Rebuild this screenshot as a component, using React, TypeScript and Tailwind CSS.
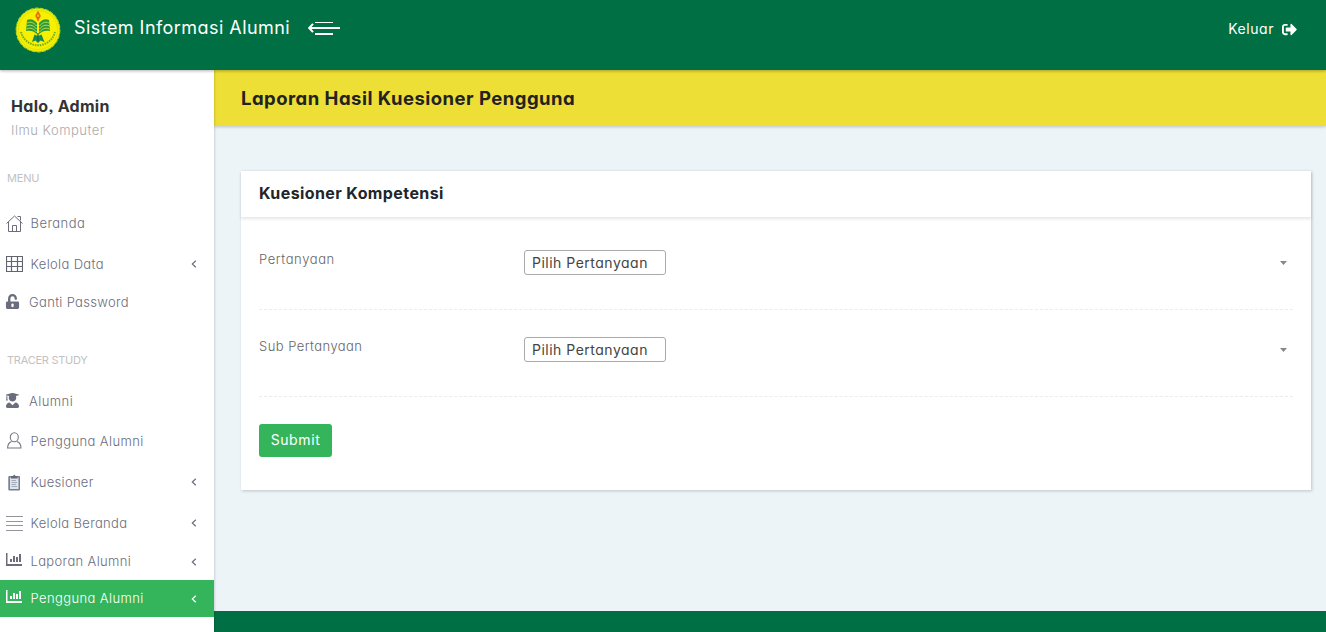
import React from "react";
import { FaUnlockAlt, FaUserGraduate, FaSignOutAlt } from "react-icons/fa";

function Logo() {
  return (
    <svg width="46" height="46" viewBox="0 0 46 46">
      <circle cx="23" cy="23" r="21.8" fill="#f7f000" stroke="#b5d318" strokeWidth="1.2" strokeDasharray="4 1.2" />
      <circle cx="23" cy="23" r="19.6" fill="none" stroke="#dcd900" strokeWidth="0.8" />
      <path d="M6 25 A17.5 17.5 0 0 0 40 25" fill="none" stroke="#6fae2b" strokeWidth="2" strokeDasharray="1.6 0.9" />
      <path d="M23 3.500 L26 9 L23 14 L20 9 Z" fill="#ee7a18" />
      <path d="M23 5 L21.500 9 L23 11 L24.500 9 Z M23 10 V14" fill="#f7d000" stroke="#e0531a" strokeWidth="0.8" />
      <path d="M12 13 C16 11 19 13 22 16 V27 C19 24 15 23 11 24 Z" fill="#2f9a3a" />
      <path d="M34 13 C30 11 27 13 24 16 V27 C27 24 31 23 35 24 Z" fill="#2f9a3a" />
      <path d="M12 16 C16 14 19 16 21.500 19 M11.500 19 C16 17 19 19 21.500 22 M11.500 22 C16 20 19 22 21.500 25 M34 16 C30 14 27 16 24.500 19 M34.500 19 C30 17 27 19 24.500 22 M34.500 22 C30 20 27 22 24.500 25" fill="none" stroke="#c8e34a" strokeWidth="0.9" />
      <path d="M17 35 L19.500 27.500 L23 29 L26.500 27.500 L29.500 35 L25.500 33.500 L23 36 L20.500 33.500 Z" fill="#168a52" />
      <path d="M23 26 V34" stroke="#0d7442" strokeWidth="1.4" />
    </svg>
  );
}

function MenuArrow() {
  return (
    <svg width="32" height="14" viewBox="0 0 32 14" fill="none" stroke="#fff">
      <path d="M7 1.500 H25" strokeWidth="1" />
      <path d="M1.500 7 H32" strokeWidth="2" />
      <path d="M7 13 H25" strokeWidth="2" />
      <path d="M5 2.800 L1.200 7 L5 11.200" strokeWidth="2" />
    </svg>
  );
}

const HomeIcon = () => (
  <svg width="17" height="17" viewBox="0 0 17 17" fill="none" stroke="#6b6d7c" strokeWidth="1">
    <path d="M0.500 8.500 L8.500 1 L16.500 8.500 M2.500 7 V16.500 H14.500 V7 M6.500 16.500 V10.500 H10.500 V16.500 M11.500 1.500 H14.500 V5.500" />
  </svg>
);
const GridIcon = () => (
  <svg width="17" height="16" viewBox="0 0 17 16" fill="none" stroke="#62646f" strokeWidth="1.200">
    <path d="M0.500 0.500 H16.500 V15.500 H0.500 Z M0.500 5.500 H16.500 M0.500 10.500 H16.500 M5.500 0.500 V15.500 M11.500 0.500 V15.500" />
  </svg>
);
const UserIcon = () => (
  <svg width="17" height="17" viewBox="0 0 17 17" fill="none" stroke="#777985" strokeWidth="1.100">
    <ellipse cx="8.300" cy="5.200" rx="4" ry="4.500" />
    <path d="M5.500 9.500 C3 10.500 1.700 12 1.600 16 H15 C14.900 12 13.600 10.500 11.100 9.500" />
  </svg>
);
const ClipboardIcon = () => (
  <svg width="17" height="17" viewBox="0 0 17 17">
    <rect x="2.300" y="2" width="11.700" height="14.500" rx="1" fill="#7c7e8a" />
    <rect x="4" y="3.500" width="8.500" height="11.500" fill="#d9e6f2" />
    <path d="M5 4.500 V2 H7 L8.200 0.500 L9.500 2 H11.500 V4.500 Z" fill="#666875" />
    <path d="M5.500 6.500 H10 M5.500 8.500 H11 M5.500 10.500 H10 M5.500 12.500 H11" stroke="#8b909f" strokeWidth="0.700" />
  </svg>
);
const LinesIcon = () => (
  <svg width="17" height="15" viewBox="0 0 17 15" stroke="#92949e" strokeWidth="1">
    <path d="M0 0.500 H17 M0 5.500 H17 M0 9.500 H17 M0 14.500 H17" />
  </svg>
);
const ChartIcon = () => (
  <svg width="17" height="13" viewBox="0 0 17 13" fill="currentColor">
    <path d="M0 0 H1.500 V11 H16 V13 H0 Z M4 6 H6 V9 H4 Z M7 3 H9 V9 H7 Z M10 4 H12 V9 H10 Z M13 1 H15 V9 H13 Z" />
  </svg>
);

type ItemProps = {
  icon: React.ReactNode;
  label: string;
  text: string;
  row: string;
  more?: boolean;
  lift?: string;
};

function Item({ icon, label, text, row, more, lift = "" }: ItemProps) {
  return (
    <a className={"flex items-center pl-1.5 pr-[17px] " + row}>
      <span className={"flex shrink-0 " + lift}>{icon}</span>
      <span className={"whitespace-nowrap text-[13px] font-light " + text}>{label}</span>
      {more && (
        <svg className="ml-auto" width="6" height="8" viewBox="0 0 6 8" fill="none" stroke="currentColor" strokeWidth="1.200">
          <path d="M4.800 0.700 L1.300 4 L4.800 7.300" />
        </svg>
      )}
    </a>
  );
}

function Field({ label, spacing }: { label: string; spacing: string }) {
  return (
    <div className="flex h-[87px] items-start border-b border-dashed border-[#ececec] pt-[27px]">
      <label className={"mt-[-1px] w-[265px] shrink-0 text-[13px] font-light leading-5 text-[#666] " + spacing}>{label}</label>
      <div className="flex flex-1 items-center justify-between pr-[6px]">
        <span className="flex h-[25px] w-[142px] items-center whitespace-nowrap rounded-[3px] border border-[#aaa] pl-[7px] text-[14px] tracking-[0.5px] text-[#444]">
          Pilih Pertanyaan
        </span>
        <svg width="7" height="4" viewBox="0 0 7 4" fill="#888">
          <path d="M0 0 H7 L3.500 4 Z" />
        </svg>
      </div>
    </div>
  );
}

export default function App() {
  return (
    <div className="flex h-[632px] w-[1326px] flex-col overflow-hidden bg-[#ecf4f8] font-['Inter',sans-serif] [font-feature-settings:'cv11','ss03']">
      <header className="relative z-10 flex h-[70px] shrink-0 items-start bg-[#007044] text-white shadow-[0_1px_3px_rgba(0,0,0,0.3)]">
        <div className="ml-[15px] mt-[7px]">
          <Logo />
        </div>
        <span className="ml-[13px] mt-[14px] w-[234px] whitespace-nowrap text-[18px] leading-7 tracking-[0.45px]">Sistem Informasi Alumni</span>
        <div className="mt-[21px]">
          <MenuArrow />
        </div>
        <a className="ml-auto mr-[29px] mt-[19px] flex items-center text-[14px] leading-5">
          <span className="mr-2 tracking-[0.55px]">Keluar</span>
          <FaSignOutAlt size={15} />
        </a>
      </header>
      <div className="flex min-h-0 flex-1">
        <aside className="z-[5] w-[214px] shrink-0 bg-white text-[#6b6d7c] shadow-[1px_0_2px_rgba(0,0,0,0.14)]">
          <div className="pl-[11px] pt-[25px]">
            <h2 className="text-[16px] font-bold leading-[22px] tracking-[0.3px] text-[#333]">Halo, Admin</h2>
            <p className="mt-[3px] text-[13px] font-light leading-5 tracking-[0.5px] text-[#aaa]">Ilmu Komputer</p>
          </div>
          <div className="mt-[28px] pl-[7px] text-[11px] leading-5 tracking-[-0.2px] text-[#c2c2c2]">MENU</div>
          <nav className="mt-[15px]">
            <Item icon={<HomeIcon />} label="Beranda" text="ml-[7.500px] tracking-[0.45px]" row="h-[41px]" lift="pb-px" />
            <Item icon={<GridIcon />} label="Kelola Data" text="ml-[7.500px] tracking-[0.35px] pt-0.5" row="h-10" more />
            <Item icon={<FaUnlockAlt size={15} />} label="Ganti Password" text="ml-[9px] tracking-[0.33px]" row="h-[37px] -ml-px" lift="pb-[3px]" />
          </nav>
          <div className="mt-[29px] pl-[7px] text-[11px] leading-5 tracking-[-0.25px] text-[#c2c2c2]">TRACER STUDY</div>
          <nav className="mt-[13px]">
            <Item icon={<FaUserGraduate size={15} />} label="Alumni" text="ml-[9px] tracking-[0.45px]" row="h-[37px] -ml-px" lift="pb-[3px]" />
            <Item icon={<UserIcon />} label="Pengguna Alumni" text="ml-[7.500px] tracking-[0.4px] pt-0.5" row="h-[41px]" />
            <Item icon={<ClipboardIcon />} label="Kuesioner" text="ml-[7.500px] tracking-[0.3px] pt-0.5" row="h-[41px] pt-px" more />
            <Item icon={<LinesIcon />} label="Kelola Beranda" text="ml-[7.500px] tracking-[0.33px] pt-0.5" row="h-[41px] pt-px" more />
            <Item icon={<ChartIcon />} label="Laporan Alumni" text="ml-[7.500px] tracking-[0.35px]" row="h-[37px]" more lift="pb-1" />
            <Item icon={<ChartIcon />} label="Pengguna Alumni" text="ml-[7.500px] tracking-[0.4px]" row="h-[37px] bg-[#34b55c] text-white" more lift="pb-1" />
          </nav>
        </aside>
        <div className="flex min-w-0 flex-1 flex-col">
          <div className="h-14 shrink-0 bg-[#eedf36] pl-[27px] pt-[14px] text-[18.500px] font-bold leading-7 tracking-[0.48px] text-[#222] shadow-[0_1px_3px_rgba(0,0,0,0.2)]">
            Laporan Hasil Kuesioner Pengguna
          </div>
          <main className="flex-1 pl-[27px] pr-[15px] pt-[45px]">
            <section className="h-[319px] bg-white shadow-[1px_1px_3px_rgba(0,0,0,0.2)]">
              <h1 className="h-[47px] border-b border-[#eaeaea] pl-[18px] pt-[10px] text-[16px] font-bold leading-6 tracking-[0.4px] text-[#212529] shadow-[0_1px_3px_rgba(0,0,0,0.1)]">
                Kuesioner Kompetensi
              </h1>
              <div className="px-[18px] pt-[5px]">
                <Field label="Pertanyaan" spacing="tracking-[0.6px]" />
                <Field label="Sub Pertanyaan" spacing="tracking-[0.45px]" />
                <button className="mt-[27px] flex h-[33px] w-[73px] items-center justify-center rounded-[3px] bg-[#34b55c] pb-0.5 text-[14px] tracking-[0.6px] text-white">
                  Submit
                </button>
              </div>
            </section>
          </main>
          <footer className="h-[21px] shrink-0 bg-[#007044]" />
        </div>
      </div>
    </div>
  );
}
